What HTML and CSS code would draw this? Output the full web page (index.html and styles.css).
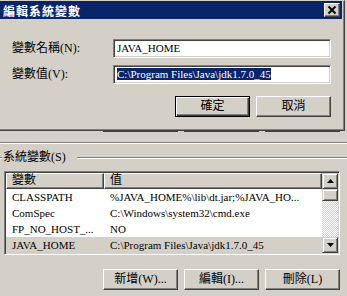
FILE: index.html
```html
<!DOCTYPE html>
<html>
<head>
    <title>編輯系統變數</title>
    <link rel="stylesheet" href="styles.css">
</head>
<body>
    <div class="dlg">
        <div class="title">
            <span class="title-text">編輯系統變數</span>
            <span class="close">
                <svg width="14" height="12" viewBox="0 0 14 12"><path d="M3.5 2.5 L10.5 9.5 M10.5 2.5 L3.5 9.5" stroke="#000" stroke-width="1.8" fill="none"/></svg>
            </span>
        </div>
        <div class="form">
            <div class="row">
                <span class="label">變數名稱(N):</span>
                <div class="edit">JAVA_HOME</div>
            </div>
            <div class="row">
                <span class="label">變數值(V):</span>
                <div class="edit"><span class="sel">C:\Program Files\Java\jdk1.7.0_45</span></div>
            </div>
            <div class="btns">
                <span class="btn default">確定</span>
                <span class="btn">取消</span>
            </div>
        </div>
    </div>

    <div class="peek">
        <span></span><span></span><span></span>
    </div>
    <div class="sep"></div>

    <div class="group-head">
        <span class="gline short"></span>
        <span class="legend">系統變數(S)</span>
        <span class="gline"></span>
    </div>

    <div class="list">
        <div class="grid">
            <div class="hdr">
                <span class="hcell c1">變數</span>
                <span class="hcell c2">值</span>
            </div>
            <div class="item"><span class="c1">CLASSPATH</span><span class="c2">%JAVA_HOME%\lib\dt.jar;%JAVA_HO...</span></div>
            <div class="item"><span class="c1">ComSpec</span><span class="c2">C:\Windows\system32\cmd.exe</span></div>
            <div class="item"><span class="c1">FP_NO_HOST_...</span><span class="c2">NO</span></div>
            <div class="item selected"><span class="c1">JAVA_HOME</span><span class="c2">C:\Program Files\Java\jdk1.7.0_45</span></div>
        </div>
        <div class="sb">
            <span class="arrow"><svg width="7" height="4" viewBox="0 0 7 4"><polygon points="3.5,0 7,4 0,4" fill="#000"/></svg></span>
            <span class="thumb"></span>
            <span class="track"></span>
            <span class="arrow"><svg width="7" height="4" viewBox="0 0 7 4"><polygon points="0,0 7,0 3.5,4" fill="#000"/></svg></span>
        </div>
    </div>

    <div class="actions">
        <span class="btn">新增(W)...</span>
        <span class="btn">編輯(I)...</span>
        <span class="btn">刪除(L)</span>
    </div>
</body>
</html>
```
FILE: styles.css
```css
body {
    margin: 0;
    width: 347px;
    height: 296px;
    overflow: hidden;
    background-color: #d4d0c8; /* classic button face */
    font-family: "Liberation Serif", "Noto Sans CJK TC", serif;
    font-size: 12px;
    color: #000;
}

/* edit dialog on top */
.dlg {
    width: 345px;
    height: 131px;
    box-sizing: border-box;
    border-top: 1px solid #d4d0c8;
    border-right: 1px solid #404040;
    border-bottom: 1px solid #404040;
    box-shadow: inset -1px -1px #808080;
    padding-right: 2px;
}
.title {
    height: 18px;
    background-color: #0a246a;
    display: flex;
    align-items: center;
    justify-content: space-between;
    padding: 0 2px 0 3px;
}
.title-text {
    color: #fff;
    font-family: "Noto Sans CJK TC", sans-serif;
    font-weight: bold;
    letter-spacing: 1px;
    line-height: 13px;
}
.close {
    width: 16px;
    height: 14px;
    box-sizing: border-box;
    background-color: #d4d0c8;
    border: 1px solid;
    border-color: #fff #404040 #404040 #fff;
    box-shadow: inset -1px -1px #808080;
    display: flex;
    align-items: center;
    justify-content: center;
}
.form {
    padding: 20px 11px 0 12px;
}
.row {
    display: flex;
    align-items: center;
    justify-content: space-between;
    height: 19px;
}
.row + .row {
    margin-top: 7px;
}
.label {
    line-height: 13px;
}
.edit {
    width: 218px;
    height: 19px;
    box-sizing: border-box;
    background-color: #fff;
    border: 1px solid;
    border-color: #808080 #fff #fff #808080;
    box-shadow: inset 1px 1px #404040, inset -1px -1px #d4d0c8;
    padding: 2px 0 0 3px;
    font-size: 11px;
    line-height: 13px;
}
.sel {
    background-color: #0a246a;
    color: #fff;
}
.btns {
    display: flex;
    justify-content: flex-end;
    gap: 6px;
    margin-top: 12px;
}
.btn {
    width: 75px;
    height: 21px;
    box-sizing: border-box;
    border: 1px solid;
    border-color: #fff #404040 #404040 #fff;
    box-shadow: inset -1px -1px #808080;
    display: flex;
    align-items: center;
    justify-content: center;
    line-height: 13px;
}
.btn.default {
    border-color: #000;
    box-shadow: inset 1px 1px #fff, inset -1px -1px #404040, inset -2px -2px #808080;
}

/* parent window underneath */
.peek {
    display: flex;
    gap: 6px;
    padding-left: 103px;
    height: 1px;
}
.peek span {
    width: 75px;
    background-color: #404040;
}
.sep {
    margin-top: 10px;
    border-top: 1px solid #808080;
    border-bottom: 1px solid #fff;
}
.group-head {
    display: flex;
    height: 13px;
    margin-top: 7px;
}
.gline {
    flex: 1;
    height: 0;
    margin-top: 6px;
    border-top: 1px solid #808080;
    border-bottom: 1px solid #fff;
}
.gline.short {
    flex: none;
    width: 2px;
}
.legend {
    line-height: 13px;
    margin-left: 1px;
    padding-right: 11px;
}

.list {
    margin: 7px 0 0 4px;
    width: 336px;
    height: 84px;
    box-sizing: border-box;
    border: 1px solid;
    border-color: #808080 #fff #fff #808080;
    box-shadow: inset 1px 1px #404040, inset -1px -1px #d4d0c8;
    padding: 1px;
    background-color: #fff;
    display: flex;
}
.grid {
    width: 316px;
}
.hdr {
    display: flex;
    height: 16px;
}
.hcell {
    box-sizing: border-box;
    height: 16px;
    background-color: #d4d0c8;
    border: 1px solid;
    border-color: #fff #404040 #404040 #fff;
    box-shadow: inset -1px -1px #808080;
    line-height: 13px;
    padding-left: 5px;
}
.hcell.c1 {
    width: 98px;
}
.hcell.c2 {
    flex: 1;
}
.item {
    display: flex;
    height: 16px;
    line-height: 16px;
    font-size: 11px;
    white-space: nowrap;
}
.item .c1 {
    width: 98px;
    padding-left: 6px;
    box-sizing: border-box;
}
.item .c2 {
    padding-left: 6px;
}
.item.selected {
    background-color: #d4d0c8;
}
.sb {
    width: 16px;
    display: flex;
    flex-direction: column;
}
.arrow, .thumb {
    height: 16px;
    box-sizing: border-box;
    background-color: #d4d0c8;
    border: 1px solid;
    border-color: #d4d0c8 #404040 #404040 #d4d0c8;
    box-shadow: inset 1px 1px #fff, inset -1px -1px #808080;
    display: flex;
    align-items: center;
    justify-content: center;
}
.thumb {
    height: 12px;
}
.track {
    flex: 1;
    background: repeating-conic-gradient(#fff 0 25%, #d4d0c8 0 50%) 0 0 / 2px 2px;
}

.actions {
    display: flex;
    gap: 6px;
    padding-left: 103px;
    margin-top: 14px;
}
```
